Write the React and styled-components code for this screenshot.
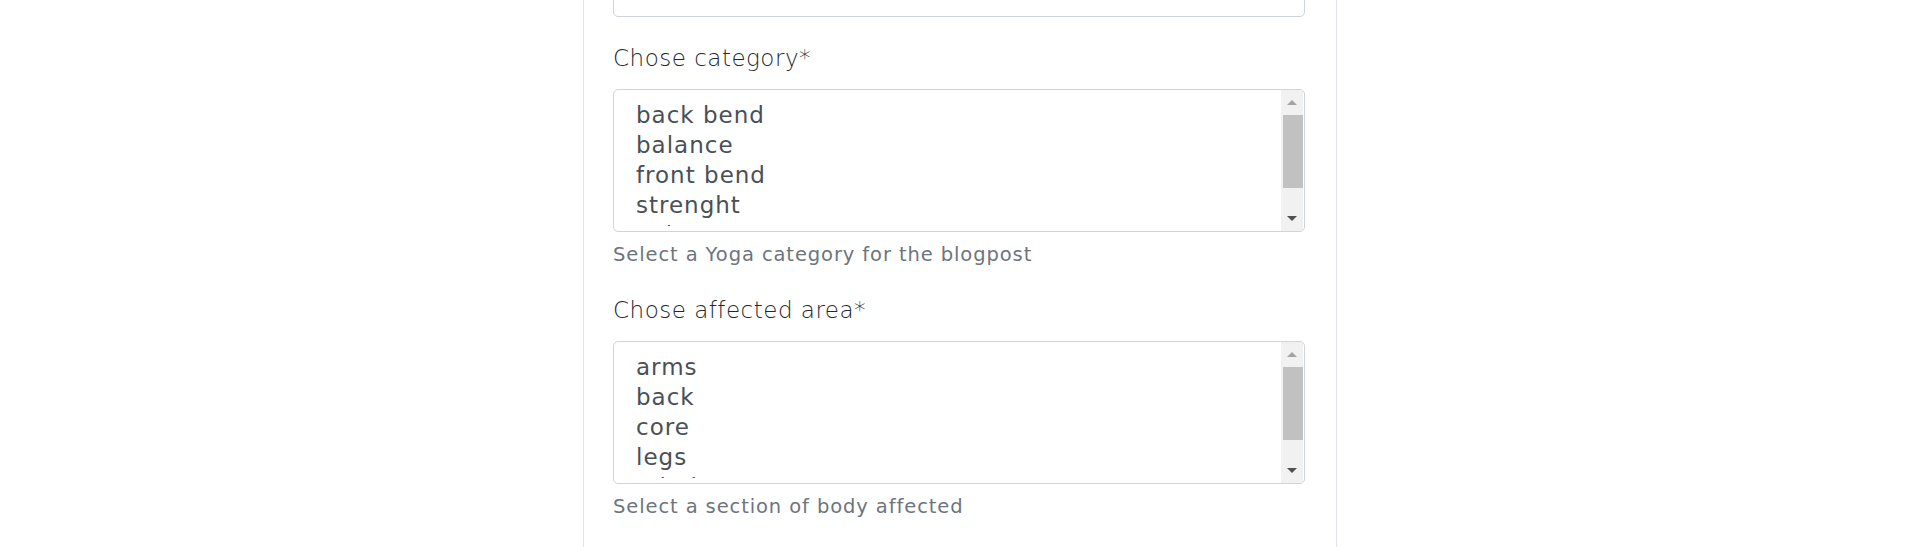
import styled, { createGlobalStyle } from "styled-components";

const GlobalStyle = createGlobalStyle`
    body {
        margin: 0;
        background: #fff;
        font-family: "DejaVu Sans", "Liberation Sans", sans-serif;
    }
`

const Page = styled.div`
    display: flex;
    justify-content: center;
    height: 547px;
    overflow: hidden;
`

const Panel = styled.div`
    width: 754px;
    box-sizing: border-box;
    border-left: 1px solid #e1e4e8;
    border-right: 1px solid #e1e4e8;
    padding: 0 31px 0 29px;
    display: flex;
    flex-direction: column;
`

// input above, mostly scrolled out of view
const TopInput = styled.div`
    flex-shrink: 0;
    height: 47px;
    margin-top: -30px;
    margin-bottom: 26px;
    border: 1px solid #ced4da;
    border-radius: 5px;
    box-sizing: border-box;
`

const FormGroup = styled.div`
    flex-shrink: 0;
    display: flex;
    flex-direction: column;
    margin-bottom: 28px;
`

const Label = styled.label`
    font-size: 23px;
    font-weight: 200;
    letter-spacing: 0.5px;
    line-height: 30px;
    color: #23272b;
    margin-bottom: 16px;
`

const ListBox = styled.div`
    display: flex;
    height: 143px;
    box-sizing: border-box;
    border: 1px solid #ced4da;
    border-radius: 5px;
    overflow: hidden;
    background: #fff;
`

const Options = styled.div`
    flex: 1;
    overflow: hidden;
    padding: 10px 0 0 22px;
    margin-bottom: 5px;
`

const Option = styled.div`
    font-size: 23px;
    letter-spacing: 1px;
    line-height: 30px;
    color: #495057;
    white-space: nowrap;
`

const ScrollBar = styled.div`
    width: 22px;
    margin-right: 1px;
    background: #f1f1f1;
    display: flex;
    flex-direction: column;
`

const ArrowButton = styled.div`
    height: 25px;
    display: flex;
    align-items: center;
    justify-content: center;

    &::after {
        content: "";
        width: 0;
        height: 0;
        border-left: 5px solid transparent;
        border-right: 5px solid transparent;
        ${props => props.up
            ? `border-bottom: 5px solid #a3a3a3;`
            : `border-top: 5px solid #505050;`}
    }
`

const Thumb = styled.div`
    height: 73px;
    margin-left: 2px;
    background: #c1c1c1;
`

const Spacer = styled.div`
    flex: 1;
`

const Help = styled.small`
    margin-top: 11px;
    font-size: 19.5px;
    letter-spacing: 0.9px;
    line-height: 24px;
    color: #6c757d;
`

const groups = [
    {
        label: "Chose category*",
        options: ["back bend", "balance", "front bend", "strenght", "twist"],
        help: "Select a Yoga category for the blogpost",
    },
    {
        label: "Chose affected area*",
        options: ["arms", "back", "core", "legs", "mind"],
        help: "Select a section of body affected",
    },
]

const App = () => {
    return (
        <>
            <GlobalStyle />
            <Page>
                <Panel>
                    <TopInput />
                    {groups.map(group => (
                        <FormGroup key={group.label}>
                            <Label>{group.label}</Label>
                            <ListBox>
                                <Options>
                                    {group.options.map(opt => (
                                        <Option key={opt}>{opt}</Option>
                                    ))}
                                </Options>
                                <ScrollBar>
                                    <ArrowButton up />
                                    <Thumb />
                                    <Spacer />
                                    <ArrowButton />
                                </ScrollBar>
                            </ListBox>
                            <Help>{group.help}</Help>
                        </FormGroup>
                    ))}
                </Panel>
            </Page>
        </>
    )
}

export default App
